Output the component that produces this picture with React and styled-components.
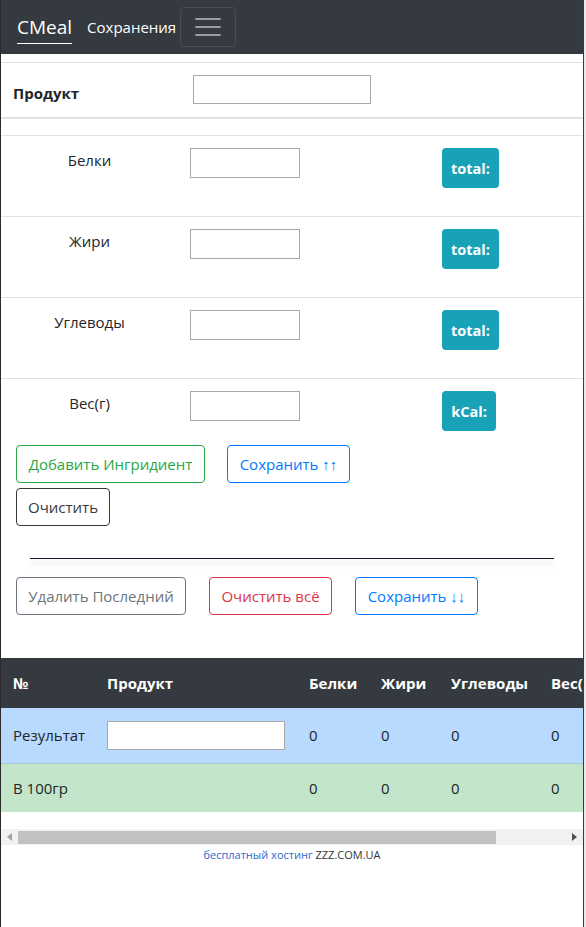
import React from 'react';
import styled, { createGlobalStyle } from 'styled-components';

const GlobalStyle = createGlobalStyle`
    html, body {
        margin: 0;
        padding: 0;
        background: #fff;
    }
    body {
        font-family: 'Open Sans', 'Noto Sans', sans-serif;
        color: #212529;
        font-size: 15px;
    }
    * {
        box-sizing: border-box;
    }
`;

const Frame = styled.div`
    display: flex;
    width: 586px;
    min-height: 927px;
`;

const Page = styled.div`
    width: 583px;
    border-left: 1px solid #2b2b2b;
    overflow: hidden;
`;

const Edge = styled.div`
    width: 3px;
    border-left: 1px solid #3a3a3a;
    background: #e9e9e9;
`;

const Navbar = styled.nav`
    display: flex;
    align-items: center;
    height: 54px;
    padding: 0 16px;
    background: #343a40;
`;

const Brand = styled.a`
    color: #fff;
    font-size: 19px;
    line-height: 26px;
    padding-bottom: 3px;
    border-bottom: 1px solid #fff;
    margin-top: 4px;
    margin-right: 15px;
`;

const NavLink = styled.a`
    color: #fff;
    font-size: 15px;
    margin-right: 4px;
`;

const Toggler = styled.button`
    display: flex;
    align-items: center;
    justify-content: center;
    width: 56px;
    height: 40px;
    background: transparent;
    border: 1px solid rgba(255, 255, 255, 0.1);
    border-radius: 4px;
    padding: 0;
`;

const ProductRow = styled.div`
    display: grid;
    grid-template-columns: 180px 1fr;
    align-items: end;
    margin-top: 8px;
    border-top: 1px solid #dee2e6;
    border-bottom: 2px solid #dee2e6;
    padding: 12px 12px 13px;
    height: 57px;
`;

const ProductLabel = styled.span`
    font-weight: 700;
    font-size: 15px;
    line-height: 24px;
    margin-bottom: -1px;
`;

const TextInput = styled.input`
    width: ${(p) => p.w}px;
    height: ${(p) => p.h || 30}px;
    border: 1px solid #a9a9a9;
    padding: 1px 2px;
    background: #fff;
    margin: 0;
    display: block;
`;

const Spacer = styled.div`
    height: 16px;
`;

const MacroRow = styled.div`
    display: grid;
    grid-template-columns: 177px 252px 1fr;
    align-items: start;
    border-top: 1px solid #dee2e6;
    padding-top: 12px;
    height: ${(p) => (p.last ? 53 : 81)}px;
`;

const MacroLabel = styled.div`
    text-align: center;
    font-size: 15px;
    line-height: 24px;
`;

const Cell = styled.div`
    padding-left: 12px;
`;

const Badge = styled.span`
    display: inline-flex;
    align-items: center;
    justify-content: center;
    height: 40px;
    width: ${(p) => p.w}px;
    background: #17a2b8;
    color: #fff;
    border-radius: 4px;
    font-weight: 700;
    font-size: 14.5px;
`;

const ButtonRow = styled.div`
    display: flex;
    gap: ${(p) => p.gap || 22}px;
    padding-left: 15px;
    margin-top: ${(p) => p.mt || 0}px;
`;

const tone = {
    success: '#28a745',
    primary: '#007bff',
    dark: '#343a40',
    secondary: '#6c757d',
    danger: '#dc3545',
};

const OutlineButton = styled.button`
    height: 38px;
    width: ${(p) => p.w}px;
    padding: 0;
    font-family: inherit;
    font-size: 15px;
    line-height: 24px;
    background: transparent;
    color: ${(p) => tone[p.tone]};
    border: 1px solid ${(p) => tone[p.tone]};
    border-radius: 4px;
`;

const Rule = styled.hr`
    margin: 32px 0 0 29px;
    width: 524px;
    height: 0;
    border: 0;
    border-top: 1px solid #1c0d2a;
    box-shadow: 0 5px 5px 0 rgba(0, 0, 0, 0.22);
`;

const TableWrap = styled.div`
    margin-top: 43px;
    overflow: hidden;
`;

const Table = styled.table`
    width: 700px;
    border-collapse: collapse;
    table-layout: fixed;
    font-size: 15px;
`;

const Th = styled.th`
    background: #343a40;
    color: #fff;
    font-weight: 700;
    text-align: left;
    padding: 13px 12px;
    height: 50px;
    line-height: 24px;
`;

const Td = styled.td`
    padding: 0 12px;
    height: ${(p) => p.h}px;
    line-height: 24px;
    background: ${(p) => p.bg};
    border-top: ${(p) => (p.line ? '1px solid #9fcbd6' : 'none')};
`;

const ScrollTrack = styled.div`
    display: flex;
    align-items: center;
    margin-top: 17px;
    height: 16px;
    background: #f1f1f1;
`;

const ScrollArrow = styled.div`
    width: 17px;
    display: flex;
    justify-content: center;
`;

const ScrollThumb = styled.div`
    height: 13px;
    background: #c1c1c1;
`;

const Footer = styled.div`
    text-align: center;
    font-size: 11px;
    color: #333;
    margin-top: 2px;
`;

const FooterLink = styled.a`
    color: #2a6ad0;
`;

const columns = [94, 202, 72, 70, 100, 162];
const macros = ['Белки', 'Жири', 'Углеводы'];

const App = () => {
    return (
        <>
            <GlobalStyle />
            <Frame>
                <Page>
                    <Navbar>
                        <Brand>CMeal</Brand>
                        <NavLink>Сохранения</NavLink>
                        <Toggler>
                            <svg width="28" height="24" viewBox="0 0 28 24">
                                <g stroke="rgba(255,255,255,0.5)" strokeWidth="2" strokeLinecap="round">
                                    <line x1="2" y1="4" x2="26" y2="4" />
                                    <line x1="2" y1="12" x2="26" y2="12" />
                                    <line x1="2" y1="20" x2="26" y2="20" />
                                </g>
                            </svg>
                        </Toggler>
                    </Navbar>

                    <ProductRow>
                        <ProductLabel>Продукт</ProductLabel>
                        <TextInput w={178} h={29} />
                    </ProductRow>
                    <Spacer />

                    {macros.map((name) => (
                        <MacroRow key={name}>
                            <MacroLabel>{name}</MacroLabel>
                            <Cell>
                                <TextInput w={110} />
                            </Cell>
                            <Cell>
                                <Badge w={57}>total:</Badge>
                            </Cell>
                        </MacroRow>
                    ))}
                    <MacroRow last>
                        <MacroLabel>Вес(г)</MacroLabel>
                        <Cell>
                            <TextInput w={110} />
                        </Cell>
                        <Cell>
                            <Badge w={54}>kCal:</Badge>
                        </Cell>
                    </MacroRow>

                    <ButtonRow mt={14}>
                        <OutlineButton tone="success" w={189}>
                            Добавить Ингридиент
                        </OutlineButton>
                        <OutlineButton tone="primary" w={123}>
                            Сохранить ↑↑
                        </OutlineButton>
                    </ButtonRow>
                    <ButtonRow mt={5}>
                        <OutlineButton tone="dark" w={94}>
                            Очистить
                        </OutlineButton>
                    </ButtonRow>

                    <Rule />

                    <ButtonRow mt={18} gap={23}>
                        <OutlineButton tone="secondary" w={170}>
                            Удалить Последний
                        </OutlineButton>
                        <OutlineButton tone="danger" w={123}>
                            Очистить всё
                        </OutlineButton>
                        <OutlineButton tone="primary" w={123}>
                            Сохранить ↓↓
                        </OutlineButton>
                    </ButtonRow>

                    <TableWrap>
                        <Table>
                            <colgroup>
                                {columns.map((w, i) => (
                                    <col key={i} style={{ width: w }} />
                                ))}
                            </colgroup>
                            <thead>
                                <tr>
                                    <Th>№</Th>
                                    <Th>Продукт</Th>
                                    <Th>Белки</Th>
                                    <Th>Жири</Th>
                                    <Th>Углеводы</Th>
                                    <Th>Вес(г)</Th>
                                </tr>
                            </thead>
                            <tbody>
                                <tr>
                                    <Td h={55} bg="#b8daff">Результат</Td>
                                    <Td h={55} bg="#b8daff">
                                        <TextInput w={178} h={29} />
                                    </Td>
                                    <Td h={55} bg="#b8daff">0</Td>
                                    <Td h={55} bg="#b8daff">0</Td>
                                    <Td h={55} bg="#b8daff">0</Td>
                                    <Td h={55} bg="#b8daff">0</Td>
                                </tr>
                                <tr>
                                    {['В 100гр', '', '0', '0', '0', '0'].map((v, i) => (
                                        <Td key={i} h={49} bg="#c3e6cb" line>
                                            {v}
                                        </Td>
                                    ))}
                                </tr>
                            </tbody>
                        </Table>
                    </TableWrap>

                    <ScrollTrack>
                        <ScrollArrow>
                            <svg width="5" height="8" viewBox="0 0 5 8">
                                <path d="M5 0 L0 4 L5 8 Z" fill="#a3a3a3" />
                            </svg>
                        </ScrollArrow>
                        <ScrollThumb style={{ width: 478 }} />
                        <div style={{ flex: 1 }} />
                        <ScrollArrow>
                            <svg width="5" height="8" viewBox="0 0 5 8">
                                <path d="M0 0 L5 4 L0 8 Z" fill="#505050" />
                            </svg>
                        </ScrollArrow>
                    </ScrollTrack>

                    <Footer>
                        <FooterLink>бесплатный хостинг</FooterLink> ZZZ.COM.UA
                    </Footer>
                </Page>
                <Edge />
            </Frame>
        </>
    );
};

export default App;
